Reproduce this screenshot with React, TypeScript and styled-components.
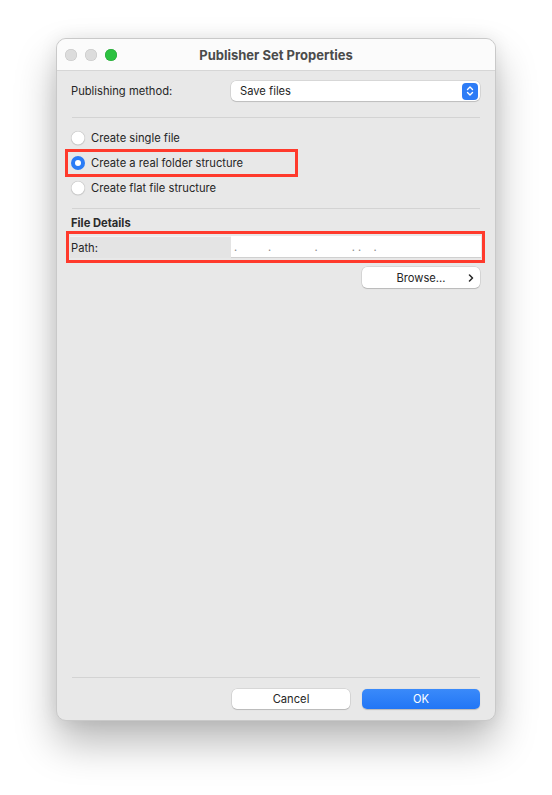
import React, { useState } from 'react';
import styled, { createGlobalStyle } from 'styled-components';

const GlobalStyle = createGlobalStyle`
  html, body {
    margin: 0;
    padding: 0;
    background: #ffffff;
  }
  body {
    font-family: Inter, "Liberation Sans", Arial, sans-serif;
    -webkit-font-smoothing: antialiased;
  }
`;

const Stage = styled.div`
  width: 552px;
  height: 795px;
  padding: 38px 0 0 56px;
  box-sizing: border-box;
`;

const Window = styled.div`
  width: 440px;
  height: 683px;
  border-radius: 10px;
  background: #e8e8e8;
  border: 1px solid #c9c9c9;
  box-sizing: border-box;
  box-shadow: 0 22px 40px rgba(0, 0, 0, 0.28), 0 0 18px rgba(0, 0, 0, 0.08);
  display: flex;
  flex-direction: column;
  overflow: hidden;
`;

const TitleBar = styled.div`
  height: 31px;
  flex-shrink: 0;
  background: #fbfbfb;
  border-bottom: 1px solid #d6d6d6;
  display: grid;
  grid-template-columns: 80px 1fr 80px;
  align-items: center;
`;

const Lights = styled.div`
  display: flex;
  gap: 8px;
  padding-left: 8px;
`;

const Light = styled.span<{ $color: string; $ring: string }>`
  width: 12px;
  height: 12px;
  border-radius: 50%;
  background: ${p => p.$color};
  box-shadow: inset 0 0 0 0.5px ${p => p.$ring};
`;

const Title = styled.div`
  text-align: center;
  font-size: 13px;
  font-weight: 700;
  color: #4b4b4b;
`;

const Body = styled.div`
  flex: 1;
  display: flex;
  flex-direction: column;
  padding: 10px 15px 11px 14px;
  font-size: 11.2px;
`;

const FieldRow = styled.div`
  display: grid;
  grid-template-columns: 160px 1fr;
  align-items: center;
  color: #262626;
`;

const Select = styled.div`
  height: 20px;
  background: #ffffff;
  border-radius: 5px;
  box-shadow: 0 0 0 0.5px rgba(0, 0, 0, 0.14), 0 1px 1px rgba(0, 0, 0, 0.12);
  display: flex;
  align-items: center;
  justify-content: space-between;
  padding: 0 2px 0 9px;
  color: #1f1f1f;
`;

const Stepper = styled.span`
  width: 16px;
  height: 17px;
  border-radius: 4px;
  background: #2d7cf6;
  display: flex;
  align-items: center;
  justify-content: center;
`;

const Separator = styled.div<{ $top: number; $bottom: number }>`
  height: 1px;
  background: #d3d3d3;
  margin: ${p => p.$top}px 0 ${p => p.$bottom}px 1px;
`;

const RadioList = styled.div`
  display: flex;
  flex-direction: column;
  align-items: flex-start;
  gap: 1px;
`;

const RadioRow = styled.label<{ $marked?: boolean }>`
  display: flex;
  align-items: center;
  gap: 6px;
  height: 24px;
  box-sizing: border-box;
  padding: 0 53px 0 0;
  color: #262626;
  cursor: default;
  outline: ${p => (p.$marked ? '3px solid #ff3a2c' : 'none')};
  outline-offset: -1px;
  margin-left: ${p => (p.$marked ? '-4px' : '0')};
  padding-left: ${p => (p.$marked ? '4px' : '0')};
`;

const RadioDot = styled.span<{ $on: boolean }>`
  width: 14px;
  height: 14px;
  flex-shrink: 0;
  border-radius: 50%;
  box-sizing: border-box;
  background: ${p => (p.$on ? '#2a7cf6' : '#ffffff')};
  box-shadow: ${p =>
    p.$on ? 'none' : 'inset 0 0 0 0.5px rgba(0,0,0,0.22), 0 0.5px 1px rgba(0,0,0,0.15)'};
  display: flex;
  align-items: center;
  justify-content: center;
  &::after {
    content: '';
    width: 6px;
    height: 6px;
    border-radius: 50%;
    background: #ffffff;
    display: ${p => (p.$on ? 'block' : 'none')};
  }
`;

const SectionTitle = styled.div`
  font-weight: 700;
  color: #2b2b2b;
  line-height: 15px;
  margin: 0;
`;

const PathBox = styled.div`
  border: 3px solid #ff3a2c;
  margin: 0 -5px 0 -5px;
  padding: 2px 1px 2px 1px;
  display: grid;
  grid-template-columns: 161px 1fr;
  background: #e8e8e8;
`;

const PathLabel = styled.div`
  background: #e4e4e4;
  color: #262626;
  display: flex;
  align-items: center;
  padding-left: 1px;
  border-top: 1px solid #f2f2f2;
`;

const PathInput = styled.input`
  height: 22px;
  border: none;
  border-bottom: 1px solid #d0d0d0;
  background: #ffffff;
  font-family: inherit;
  font-size: 11px;
  padding: 0 3px;
  box-sizing: border-box;
  outline: none;
  color: #8a8a8a;
  white-space: pre;
`;

const ButtonRow = styled.div<{ $top: number }>`
  display: flex;
  justify-content: flex-end;
  gap: 12px;
  margin-top: ${p => p.$top}px;
`;

const Button = styled.button<{ $primary?: boolean; $tall?: boolean }>`
  width: 118px;
  height: ${p => (p.$tall ? 21 : 20)}px;
  border: none;
  border-radius: 5px;
  font-family: inherit;
  font-size: 11.2px;
  position: relative;
  background: ${p => (p.$primary ? 'linear-gradient(#3a8afa, #2276f5)' : '#ffffff')};
  color: ${p => (p.$primary ? '#ffffff' : '#262626')};
  box-shadow: ${p =>
    p.$primary
      ? '0 0.5px 1px rgba(0,0,0,0.2)'
      : '0 0 0 0.5px rgba(0,0,0,0.14), 0 1px 1px rgba(0,0,0,0.14)'};
  padding: 0;
`;

const Chevron = styled.span`
  position: absolute;
  right: 6px;
  top: 50%;
  transform: translateY(-50%);
  display: flex;
`;

const Spacer = styled.div`
  flex: 1;
`;

const options = [
  'Create single file',
  'Create a real folder structure',
  'Create flat file structure',
];

export default function App() {
  const [choice, setChoice] = useState(1);

  return (
    <>
      <GlobalStyle />
      <Stage>
        <Window>
          <TitleBar>
            <Lights>
              <Light $color="#dcdcdc" $ring="#c4c4c4" />
              <Light $color="#dcdcdc" $ring="#c4c4c4" />
              <Light $color="#2cc140" $ring="#25a236" />
            </Lights>
            <Title>Publisher Set Properties</Title>
            <span />
          </TitleBar>
          <Body>
            <FieldRow>
              <span>Publishing method:</span>
              <Select>
                <span>Save files</span>
                <Stepper>
                  <svg width="8" height="12" viewBox="0 0 8 12" fill="none">
                    <path d="M1.5 4.5 L4 2 L6.5 4.5" stroke="#fff" strokeWidth="1.4" strokeLinecap="round" strokeLinejoin="round" />
                    <path d="M1.5 7.5 L4 10 L6.5 7.5" stroke="#fff" strokeWidth="1.4" strokeLinecap="round" strokeLinejoin="round" />
                  </svg>
                </Stepper>
              </Select>
            </FieldRow>
            <Separator $top={16} $bottom={8} />
            <RadioList>
              {options.map((label, i) => (
                <RadioRow key={label} $marked={i === 1} onClick={() => setChoice(i)}>
                  <RadioDot $on={choice === i} />
                  <span>{label}</span>
                </RadioRow>
              ))}
            </RadioList>
            <Separator $top={8} $bottom={7} />
            <SectionTitle>File Details</SectionTitle>
            <PathBox>
              <PathLabel>Path:</PathLabel>
              <PathInput readOnly value={'.          .              .           . .    .'} />
            </PathBox>
            <ButtonRow $top={4}>
              <Button $tall>
                Browse...
                <Chevron>
                  <svg width="6" height="8" viewBox="0 0 6 8" fill="none">
                    <path d="M1.5 1 L4.5 4 L1.5 7" stroke="#262626" strokeWidth="1.5" strokeLinecap="round" strokeLinejoin="round" />
                  </svg>
                </Chevron>
              </Button>
            </ButtonRow>
            <Spacer />
            <Separator $top={0} $bottom={11} />
            <ButtonRow $top={0}>
              <Button>Cancel</Button>
              <Button $primary>OK</Button>
            </ButtonRow>
          </Body>
        </Window>
      </Stage>
    </>
  );
}
